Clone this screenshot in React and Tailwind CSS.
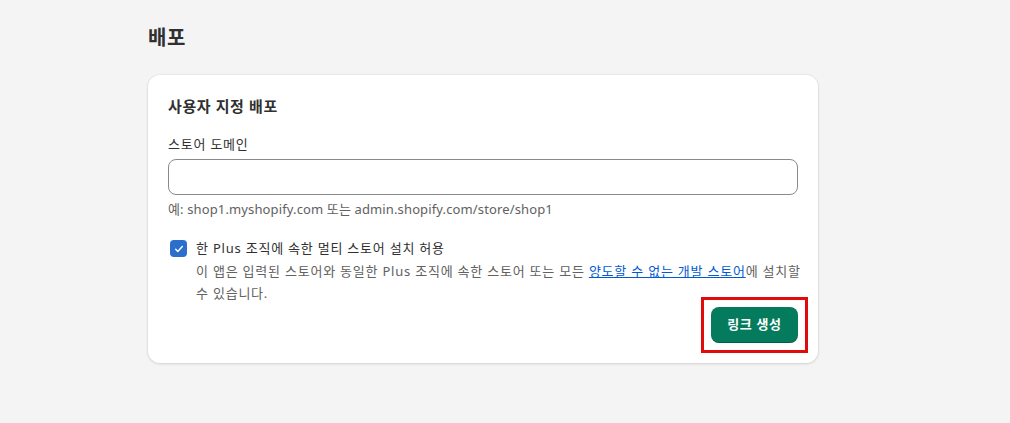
import React from 'react';

const font = { fontFamily: '"Noto Sans", "Noto Sans CJK KR", sans-serif' };

const CheckIcon = () => (
  <svg viewBox="0 0 20 20" className="h-3 w-3" fill="none">
    <path d="M4.5 10.5l3.5 3.5 7.5-8" stroke="white" strokeWidth="2.4" strokeLinecap="round" strokeLinejoin="round" />
  </svg>
);

const App = () => {
  return (
    <div className="min-h-[423px] w-full bg-[#f4f4f4] text-[#303030]" style={font}>
      <div className="pl-[148px] pt-[24px] w-[818px]">
        <h1 className="text-[20px] font-bold leading-[28px] tracking-[0.03em]">배포</h1>

        <div className="mt-[23px] bg-white rounded-[12px] shadow-[0_1px_3px_rgba(0,0,0,0.12),0_0_0_1px_rgba(0,0,0,0.03)] px-[20px] pt-[20px] pb-[20px]">
          <h2 className="text-[15px] font-bold leading-[22px] tracking-[0.04em]">사용자 지정 배포</h2>

          <div className="mt-[17px]">
            <label className="block text-[13px] leading-[20px] tracking-[0.06em]">스토어 도메인</label>
            <input
              type="text"
              className="mt-[5px] block w-full h-[36px] rounded-[8px] border border-[#8a8a8a] bg-white px-3 text-[13px] outline-none"
            />
            <p className="mt-[4px] text-[13px] leading-[20px] text-[#616161] tracking-[0.01em]">
              예: shop1.myshopify.com 또는 admin.shopify.com/store/shop1
            </p>
          </div>

          <div className="mt-[18px] flex gap-[9px]">
            <div className="mt-[3px] ml-[2px] h-[17px] w-[17px] shrink-0 rounded-[4px] bg-[#2c6ecb] flex items-center justify-center">
              <CheckIcon />
            </div>
            <div className="text-[13px] leading-[22px] tracking-[0.06em]">
              <p className="text-[#303030]">한 Plus 조직에 속한 멀티 스토어 설치 허용</p>
              <p className="text-[#616161] mt-[1px] w-[608px] break-keep tracking-[0.06em]">
                이 앱은 입력된 스토어와 동일한 Plus 조직에 속한 스토어 또는 모든{' '}
                <a href="#" className="text-[#005bd3] underline">양도할 수 없는 개발 스토어</a>에 설치할 수 있습니다.
              </p>
            </div>
          </div>

          <div className="mt-[3px] flex justify-end">
            <div className="relative">
              <button className="h-[36px] w-[87px] rounded-[8px] bg-[#047b5d] text-white text-[13px] font-bold tracking-[0.05em] shadow-[inset_0_-1px_0_rgba(0,0,0,0.25)]">
                링크 생성
              </button>
              <div className="pointer-events-none absolute -inset-[10px] border-[3px] border-[#e00c0c]" />
            </div>
          </div>
        </div>
      </div>
    </div>
  );
};

export default App;
